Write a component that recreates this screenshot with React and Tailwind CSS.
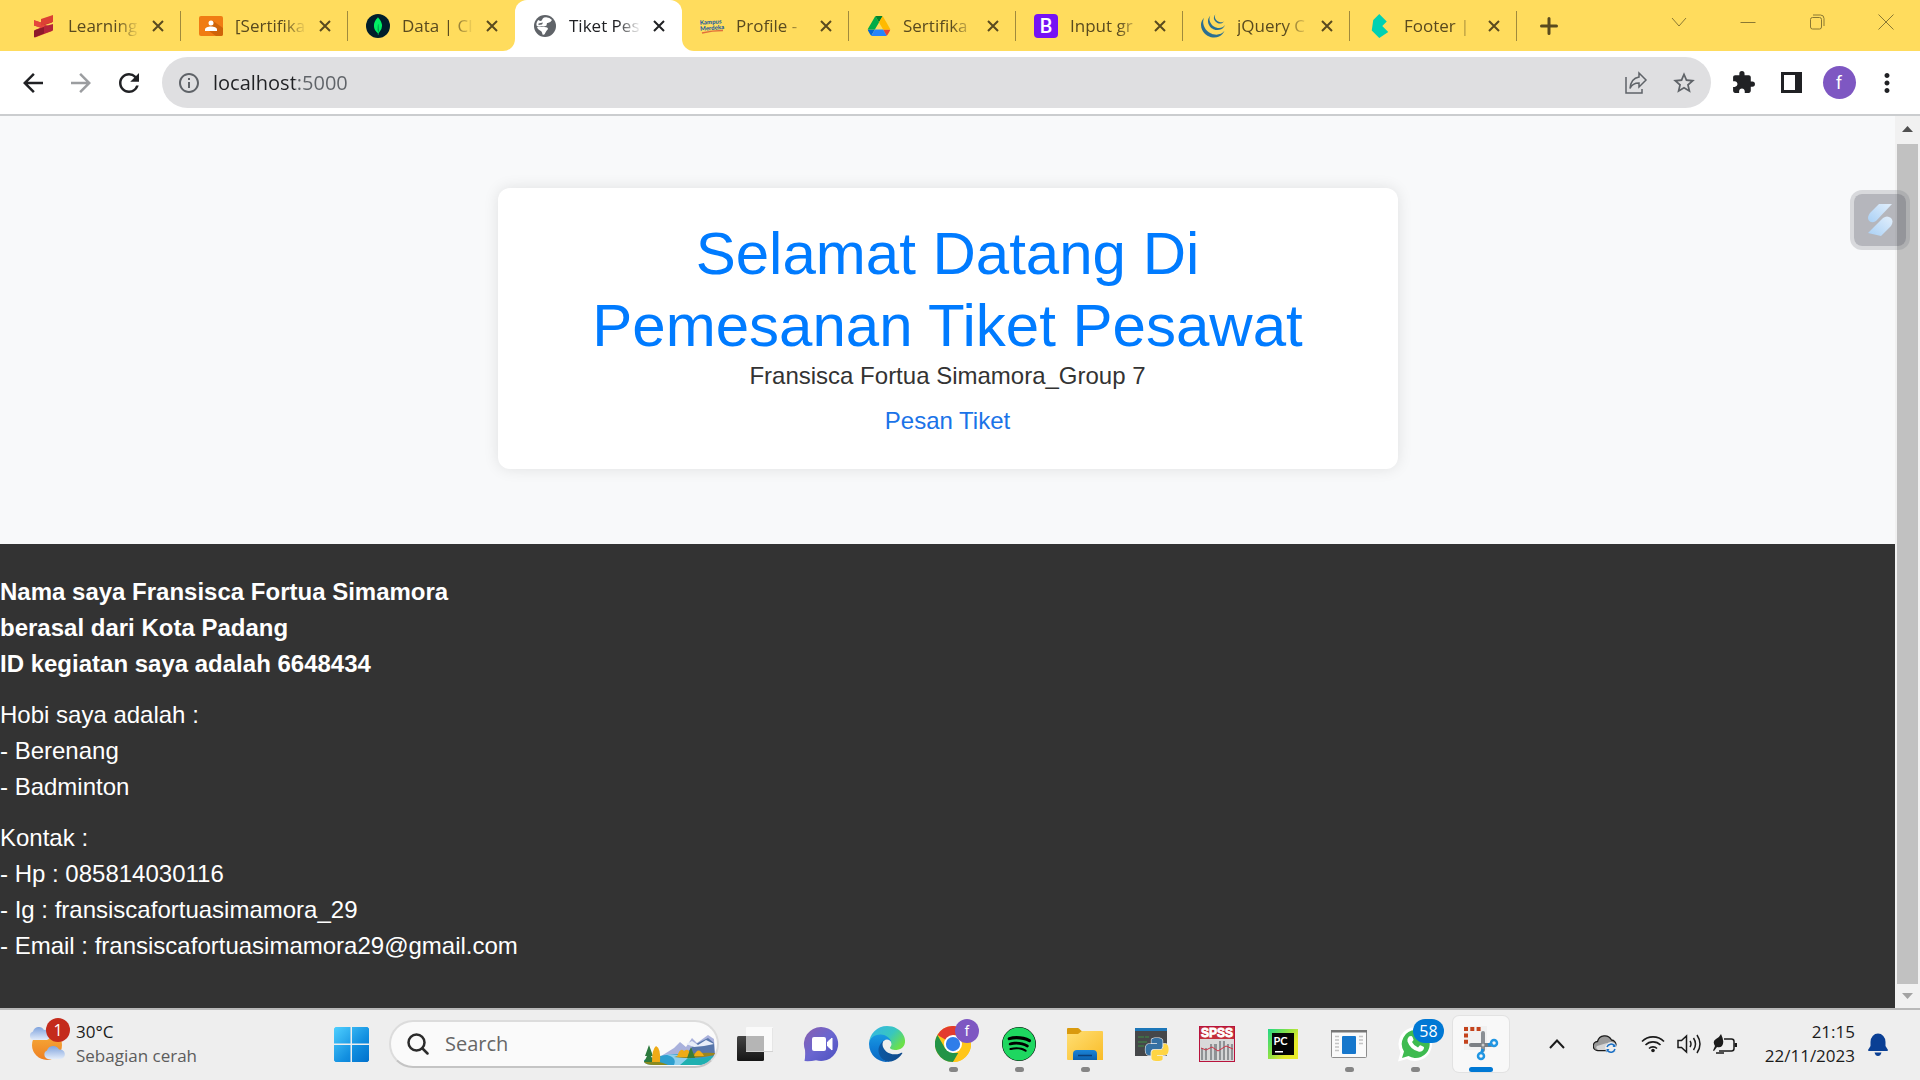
import React from "react";
import {
  MdArrowBack,
  MdArrowForward,
  MdExtension,
  MdInfoOutline,
  MdMoreVert,
  MdRefresh,
  MdStarBorder,
} from "react-icons/md";
import { SiBulma, SiJquery, SiMongodb } from "react-icons/si";
import { FaSpotify } from "react-icons/fa";

const SANS = "font-['Open_Sans','Noto_Sans',sans-serif]";

/* ---------- Tab favicons ---------- */

function LearningIcon() {
  return (
    <svg viewBox="0 0 24 24" className="size-6">
      <path d="M2 6.500 L9 8.500 L20 5 V8.500 L13 11 L20 12.500 V17 L3 23.500 V16 L9 13.500 L2 11.500 Z" fill="#c62f30" />
      <path d="M2 6 L9 8.500 L14 12 L9 14 L2 11.500 Z" fill="#e5473c" />
      <path d="M9 5 L21 1 V8 L9 11.500 Z" fill="#dc4034" />
      <path d="M2 16.500 L12 13 V19.500 L2 23.500 Z" fill="#8f1a2b" />
      <path d="M12 12.500 L21 10 V16.500 L12 19.500 Z" fill="#b3243a" />
    </svg>
  );
}

function ClassroomIcon() {
  return (
    <svg viewBox="0 0 24 24" className="size-6">
      <rect x="0" y="2" width="24" height="20" rx="2" fill="#f07c13" />
      <path d="M14 7 L24 14 V20 Q24 22 22 22 H17 L10 17 Z" fill="#cf6409" />
      <circle cx="12" cy="9" r="2.500" fill="#fff" />
      <path d="M6 17 V15.500 C6 13.500 9 12.500 12 12.500 S18 13.500 18 15.500 V17 Z" fill="#fff" />
    </svg>
  );
}

function MongoIcon() {
  return (
    <span className="flex size-6 items-center justify-center rounded-full bg-[#001e2b]">
      <SiMongodb className="size-[18px] text-[#00ed64]" />
    </span>
  );
}

function GlobeIcon() {
  return (
    <svg viewBox="0 0 24 24" className="size-6">
      <circle cx="12" cy="12" r="11" fill="#5f6368" />
      <path d="M11 3.500 Q16 2.500 19 6 Q17 9.500 14 9 L13.500 11.500 Q11 13 8 12 Q5 13 3.500 11.500 Q3 8 5.500 6 Q8 8 9 6 Q9.500 4 11 3.500 Z" fill="#fff" />
      <path d="M4 13 Q7 12 10 13 Q15 12.500 15 15 Q13 17 12.500 18.500 Q11.500 21.500 9.500 20.500 Q9 17 7 16.500 Q4.500 15.500 4 13 Z" fill="#fff" />
      <path d="M5.500 9.500 L10 8.500 L9 10.500 L5.500 11 Z" fill="#5f6368" />
    </svg>
  );
}

function KampusIcon() {
  return (
    <svg viewBox="0 0 24 24" className="size-6 overflow-visible">
      <g transform="rotate(-4 12 12)" fontFamily="Lato, sans-serif" fontWeight="900" fill="#235d9f">
        <text x="0" y="10" fontSize="6">Kampus</text>
        <text x="0" y="16" fontSize="6">Merdeka</text>
      </g>
      <path d="M2 19 Q12 16.500 23 16.500" stroke="#e2703a" strokeWidth="1.500" fill="none" />
    </svg>
  );
}

function DriveIcon() {
  return (
    <svg viewBox="0 0 87.3 78" className="h-5 w-6">
      <path d="m6.6 66.85 3.85 6.65c.8 1.4 1.95 2.5 3.3 3.3l13.75-23.8h-27.5c0 1.55.4 3.1 1.2 4.5z" fill="#0066da" />
      <path d="m43.65 25-13.75-23.8c-1.35.8-2.5 1.9-3.3 3.3l-25.4 44a9.06 9.06 0 0 0-1.2 4.5h27.5z" fill="#00ac47" />
      <path d="m73.55 76.8c1.35-.8 2.5-1.9 3.3-3.3l1.6-2.75 7.65-13.25c.8-1.4 1.2-2.95 1.2-4.5h-27.5l5.85 11.5z" fill="#ea4335" />
      <path d="m43.65 25 13.75-23.8c-1.35-.8-2.9-1.2-4.5-1.2h-18.5c-1.6 0-3.15.45-4.5 1.2z" fill="#00832d" />
      <path d="m59.8 53h-32.3l-13.75 23.8c1.35.8 2.9 1.2 4.5 1.2h50.8c1.6 0 3.15-.45 4.5-1.2z" fill="#2684fc" />
      <path d="m73.4 26.5-12.7-22c-.8-1.4-1.95-2.5-3.3-3.3l-13.75 23.8 16.15 28h27.45c0-1.55-.4-3.1-1.2-4.5z" fill="#ffba00" />
    </svg>
  );
}

function BootstrapIcon() {
  return (
    <span className="flex size-6 items-center justify-center rounded-sm bg-[#7512f5] font-['Roboto',sans-serif] text-xl leading-none font-medium text-white">
      B
    </span>
  );
}

const TABS = [
  { title: "Learning", icon: <LearningIcon /> },
  { title: "[Sertifika", icon: <ClassroomIcon /> },
  { title: "Data | Cl", icon: <MongoIcon /> },
  { title: "Tiket Pes", icon: <GlobeIcon />, active: true },
  { title: "Profile -", icon: <KampusIcon /> },
  { title: "Sertifika", icon: <DriveIcon /> },
  { title: "Input gr", icon: <BootstrapIcon /> },
  { title: "jQuery C", icon: <SiJquery className="size-6 text-[#2a6f92]" /> },
  { title: "Footer |", icon: <SiBulma className="size-6 text-[#00d1b2]" /> },
];

function Tab({ tab, divider }) {
  return (
    <div
      className={
        tab.active
          ? "relative flex h-full w-[167px] items-center rounded-t-xl bg-white text-[#202124]"
          : "relative flex h-full w-[167px] items-center text-[#594a1f]"
      }
    >
      {tab.active && (
        <>
          <span className="absolute bottom-0 -left-3 size-3 bg-white">
            <span className="block size-3 rounded-br-xl bg-[#ffdc5d]" />
          </span>
          <span className="absolute -right-3 bottom-0 size-3 bg-white">
            <span className="block size-3 rounded-bl-xl bg-[#ffdc5d]" />
          </span>
        </>
      )}
      <button type="button" className="flex h-full min-w-0 flex-1 items-center gap-3 pl-[18px]">
        <span className="flex w-6 shrink-0 justify-center">{tab.icon}</span>
        <span className="text-left text-[17px] whitespace-nowrap [mask-image:linear-gradient(to_right,black_48px,transparent_72px)]">
          {tab.title}
        </span>
      </button>
      <button type="button" aria-label="Close tab" className="mr-2.5 flex size-6 items-center justify-center">
        <svg viewBox="0 0 12 12" className="size-3" stroke="currentColor" strokeWidth="2">
          <path d="M1 1 L11 11 M11 1 L1 11" />
        </svg>
      </button>
      <span className={divider ? "h-[30px] w-px bg-[#a08a3c]" : "h-[30px] w-px"} />
    </div>
  );
}

function WindowButton({ label, children }) {
  return (
    <button type="button" aria-label={label} className="flex h-[43px] w-[69px] items-center justify-center text-[#8a7833]">
      <svg viewBox="0 0 16 16" className="size-4" fill="none" stroke="currentColor">
        {children}
      </svg>
    </button>
  );
}

function TabStrip() {
  return (
    <div className="flex h-[51px] bg-[#ffdc5d] pl-3.5">
      {TABS.map((tab, i) => (
        <Tab key={i} tab={tab} divider={!tab.active && !(TABS[i + 1] && TABS[i + 1].active)} />
      ))}
      <button type="button" aria-label="New tab" className="ml-4 flex w-8 items-center justify-center text-[#594a1f]">
        <svg viewBox="0 0 18 18" className="size-[18px]" stroke="currentColor" strokeWidth="3" strokeLinecap="round">
          <path d="M9 1.500 V16.500 M1.500 9 H16.500" />
        </svg>
      </button>
      <div className="ml-auto flex">
        <WindowButton label="Search tabs">
          <path d="M1 4 L8 12 L15 4" />
        </WindowButton>
        <WindowButton label="Minimize">
          <path d="M0.500 8.500 H15.500" />
        </WindowButton>
        <WindowButton label="Restore">
          <rect x="1.500" y="3.500" width="11" height="11.500" rx="2" />
          <path d="M4 1 H11.500 Q15 1 15 4.500 V12" />
        </WindowButton>
        <WindowButton label="Close">
          <path d="M0.500 0.500 L15.500 15.500 M15.500 0.500 L0.500 15.500" />
        </WindowButton>
      </div>
    </div>
  );
}

/* ---------- Toolbar ---------- */

function ToolButton({ label, children }) {
  return (
    <button type="button" aria-label={label} className="flex h-12 w-12 shrink-0 items-center justify-center">
      {children}
    </button>
  );
}

function Toolbar() {
  return (
    <div className="flex h-[65px] items-center border-b-2 border-[#cbcdcf] bg-white pr-[9px] pl-[9px] text-[#202124]">
      <ToolButton label="Back">
        <MdArrowBack className="size-[30px]" />
      </ToolButton>
      <ToolButton label="Forward">
        <MdArrowForward className="size-[30px] text-[#9b9da0]" />
      </ToolButton>
      <ToolButton label="Reload">
        <MdRefresh className="size-[30px]" />
      </ToolButton>
      <div className="mr-2 ml-[9px] flex h-[51px] min-w-0 flex-1 items-center rounded-full bg-[#dfdfe1] pr-[3px] pl-[15px]">
        <MdInfoOutline className="size-6 shrink-0 text-[#5f6368]" />
        <div className="relative ml-3 flex min-w-0 flex-1 items-center text-xl">
          <label htmlFor="address" className="sr-only">
            Address
          </label>
          <input
            id="address"
            type="text"
            defaultValue="localhost:5000"
            className="w-full bg-[linear-gradient(to_right,#202124_82px,#5f6368_82px)] bg-clip-text text-transparent outline-none"
          />
        </div>
        <ToolButton label="Share">
          <svg viewBox="0 0 24 24" className="size-6" fill="none" stroke="#5f6368" strokeWidth="1.500">
            <path d="M2 6 V22 H18 V18" />
            <path d="M15 2 L22 9 L15 16 V12 C10 12 7.500 14 6 17.500 C6.500 11 9 7 15 6 Z" />
          </svg>
        </ToolButton>
        <ToolButton label="Bookmark">
          <MdStarBorder className="size-[26px] text-[#5f6368]" />
        </ToolButton>
      </div>
      <ToolButton label="Extensions">
        <MdExtension className="size-[25px]" />
      </ToolButton>
      <ToolButton label="Side panel">
        <span className="flex h-[21px] w-[21px] border-[3px] border-r-[7px] border-[#202124]" />
      </ToolButton>
      <ToolButton label="Profile">
        <span className="flex size-[33px] items-center justify-center rounded-full bg-[#7e57c2] font-['Roboto',sans-serif] text-lg text-white">
          f
        </span>
      </ToolButton>
      <ToolButton label="Menu">
        <MdMoreVert className="size-[30px]" />
      </ToolButton>
    </div>
  );
}

/* ---------- Web page ---------- */

function Page() {
  return (
    <div className="flex flex-1 flex-col bg-[#f8f9fa] font-['Liberation_Sans',Arial,sans-serif] text-2xl leading-9 text-[#333]">
      <main className="px-6 pt-[72px] pb-[75px]">
        <section className="mx-auto max-w-[900px] rounded-xl bg-white p-[30px] text-center shadow-[0_0_15px_rgba(0,0,0,0.1)]">
          <h1 className="mx-auto max-w-[780px] text-6xl leading-[72px] text-[#007bff]">
            Selamat Datang Di Pemesanan Tiket Pesawat
          </h1>
          <h2 className="mb-[13px] text-2xl leading-7">Fransisca Fortua Simamora_Group 7</h2>
          <a href="#pesan" className="block text-[#1a73e8]">
            Pesan Tiket
          </a>
        </section>
      </main>
      <footer className="flex flex-1 flex-col gap-[15px] bg-[#333] pt-[30px] pb-6 text-white">
        <p className="font-bold">
          Nama saya Fransisca Fortua Simamora
          <br />
          berasal dari Kota Padang
          <br />
          ID kegiatan saya adalah 6648434
        </p>
        <p>
          Hobi saya adalah :<br />- Berenang
          <br />- Badminton
        </p>
        <p>
          Kontak :<br />- Hp : 085814030116
          <br />- Ig : fransiscafortuasimamora_29
          <br />- Email : fransiscafortuasimamora29@gmail.com
        </p>
      </footer>
    </div>
  );
}

function Scrollbar() {
  return (
    <div className="flex w-[25px] shrink-0 flex-col items-center bg-[#f1f1f1]">
      <svg viewBox="0 0 11 6" className="mt-[10px] mb-3 h-1.5 w-[11px]">
        <path d="M0 6 L5.500 0 L11 6 Z" fill="#505050" />
      </svg>
      <div className="w-[21px] flex-1 bg-[#c1c1c1]" />
      <svg viewBox="0 0 11 6" className="mt-[9px] mb-[9px] h-1.5 w-[11px]">
        <path d="M0 0 L5.500 6 L11 0 Z" fill="#a3a3a3" />
      </svg>
    </div>
  );
}

function FloatingWidget() {
  return (
    <button
      type="button"
      aria-label="Quick panel"
      className="absolute top-[74px] right-[10px] flex size-[60px] items-center justify-center rounded-xl border-4 border-[#787c85]/25 bg-[#50535f]/40 bg-clip-padding"
    >
      <svg viewBox="0 0 26 34" className="h-[34px] w-[26px]">
        <defs>
          <linearGradient id="widgetBlue" x1="0" y1="1" x2="1" y2="0">
            <stop offset="0" stopColor="#a9d0f5" />
            <stop offset="1" stopColor="#e2effc" />
          </linearGradient>
        </defs>
        <path d="M12 1 H25 L9 18 Q4 21 1.500 17 Q0 14 3 10 Z" fill="url(#widgetBlue)" />
        <path d="M14 33 L1 30 L16 15 Q20 12 24 15 Q27 18 24 23 Z" fill="url(#widgetBlue)" />
      </svg>
    </button>
  );
}

/* ---------- Taskbar icons ---------- */

function WeatherIcon() {
  return (
    <svg viewBox="0 0 38 36" className="h-9 w-[38px]">
      <defs>
        <linearGradient id="sun" x1="0" y1="0" x2="0" y2="1">
          <stop offset="0" stopColor="#f7b23c" />
          <stop offset="1" stopColor="#ee7f22" />
        </linearGradient>
        <linearGradient id="cloud" x1="0" y1="0" x2="0" y2="1">
          <stop offset="0" stopColor="#7fa3dd" />
          <stop offset="1" stopColor="#e3ecfa" />
        </linearGradient>
      </defs>
      <circle cx="19" cy="19" r="15" fill="url(#sun)" />
      <path d="M5 14 A4.500 4.500 0 0 1 5 5.500 A6 6 0 0 1 16 4 A5 5 0 0 1 19 14 Z" fill="url(#cloud)" />
      <path d="M20 33 A4.500 4.500 0 0 1 19 24.500 A6.500 6.500 0 0 1 31 23.500 A4.500 4.500 0 0 1 33 33 Z" fill="url(#cloud)" />
    </svg>
  );
}

function StartIcon() {
  return (
    <svg viewBox="0 0 35 35" className="size-[35px]">
      <defs>
        <linearGradient id="win" x1="0" y1="0" x2="1" y2="1">
          <stop offset="0" stopColor="#4fd0ff" />
          <stop offset="0.600" stopColor="#128fe0" />
          <stop offset="1" stopColor="#0070cc" />
        </linearGradient>
      </defs>
      <path
        d="M1.500 0 H16.500 V16.500 H0 V1.500 Z M18 0 H33.500 L35 1.500 V16.500 H18 Z M0 18 H16.500 V35 H1.500 L0 33.500 Z M18 18 H35 V33.500 L33.500 35 H18 Z"
        fill="url(#win)"
      />
    </svg>
  );
}

function LandscapeIcon() {
  return (
    <svg viewBox="0 0 72 32" className="h-8 w-[72px]">
      <path d="M14 24 L30 14 L36 8 L42 13 L48 4 L53 9 L64 1 L70 5 L71 24 Z" fill="#a9b1dc" />
      <path d="M40 22 L50 11 L58 7 L64 4 L70 9 L71 24 Z" fill="#5877ab" />
      <path d="M42 10 L48 7 L54 11 L62 6 L70 10 L60 12 L50 13 Z" fill="#e9eef9" />
      <path d="M0 26 Q30 16 71 22 L68 27 Q62 31 54 31 H10 Q2 31 0 28 Z" fill="#2e9fcf" />
      <path d="M18 20 Q34 22 30 31 H50 Q40 25 50 22 Z" fill="#8fd0ee" />
      <path d="M44 24 Q58 27 71 21 L69 26 Q62 31 54 31 H36 Z" fill="#1fb0b0" />
      <path d="M30 23 Q50 26 71 21 V19 Q50 18 30 23 Z" fill="#9a8620" />
      <path d="M0 27 Q12 26 24 31 H10 Q2 31 0 28 Z" fill="#8a8a1e" />
      <path d="M5 11 L9 22 H7 L10 28 H0 L3 22 H1 Z" fill="#2c7a3e" />
      <path d="M12 12 Q17 14 16 28 H8 Q8 15 12 12 Z M33 23 Q36 13 40 17 Q46 13 46 23 Z M50 22 Q54 11 60 22 Z" fill="#efab16" />
      <path d="M47 13 L51 24 H43 Z" fill="#3b7d35" />
    </svg>
  );
}

function TaskViewIcon() {
  return (
    <svg viewBox="0 0 36 36" className="size-9">
      <defs>
        <linearGradient id="tv" x1="0" y1="0" x2="0" y2="1">
          <stop offset="0" stopColor="#444" />
          <stop offset="1" stopColor="#151515" />
        </linearGradient>
      </defs>
      <rect x="0" y="10" width="27" height="25" rx="1.500" fill="url(#tv)" />
      <rect x="9" y="1" width="27" height="24" rx="1" fill="#fafafa" />
      <rect x="9" y="10" width="18" height="15" fill="#b5b5b5" />
      <path d="M9 25.500 H36 V2" stroke="#d2d2d2" fill="none" />
    </svg>
  );
}

function MeetIcon() {
  return (
    <svg viewBox="0 0 36 36" className="size-9">
      <defs>
        <linearGradient id="meet" x1="0" y1="0" x2="1" y2="1">
          <stop offset="0" stopColor="#8a5fae" />
          <stop offset="0.500" stopColor="#6a66d0" />
          <stop offset="1" stopColor="#4c50c0" />
        </linearGradient>
      </defs>
      <path d="M18 1 A17 17 0 1 1 13 34.200 Q7 35.500 1.500 35 Q2.500 30 2 24 A17 17 0 0 1 18 1 Z" fill="url(#meet)" />
      <rect x="9" y="11" width="14" height="14" rx="2" fill="#fff" />
      <path d="M24.500 16 L29 12 V24 L24.500 20 Z" fill="#fff" stroke="#fff" strokeLinejoin="round" />
    </svg>
  );
}

function EdgeIcon() {
  return (
    <svg viewBox="0 0 256 256" className="size-9">
      <defs>
        <linearGradient id="edgeA" x1="0" y1="0" x2="1" y2="0">
          <stop offset="0" stopColor="#0c59a4" />
          <stop offset="1" stopColor="#114a8b" />
        </linearGradient>
        <linearGradient id="edgeB" x1="0" y1="0" x2="0" y2="1">
          <stop offset="0" stopColor="#1b9de2" />
          <stop offset="0.500" stopColor="#0f7fd6" />
          <stop offset="1" stopColor="#0a67c0" />
        </linearGradient>
        <linearGradient id="edgeC" x1="0" y1="0" x2="1" y2="0.600">
          <stop offset="0" stopColor="#35b4e8" />
          <stop offset="0.600" stopColor="#38c6c0" />
          <stop offset="1" stopColor="#6be04a" />
        </linearGradient>
      </defs>
      <path d="M230.600 190.500a98 98 0 0 1-10.500 4.700 101.700 101.700 0 0 1-35.800 6.400c-47.200 0-88.300-32.500-88.300-74.100a31.400 31.400 0 0 1 16.400-27.300c-42.700 1.800-53.600 46.300-53.600 72.300 0 73.700 67.900 81.200 82.600 81.200 7.900 0 19.800-2.300 27-4.600l1.300-.4a127.900 127.900 0 0 0 66.600-52.700 4 4 0 0 0-5.700-5.500z" fill="url(#edgeA)" />
      <path d="M105.700 241.400a79.200 79.200 0 0 1-22.700-21.300 80.700 80.700 0 0 1 29.500-120c3.200-1.500 8.500-4.100 15.600-4a32.400 32.400 0 0 1 25.700 13 31.900 31.900 0 0 1 6.400 18.700c0-.2 24.500-79.600-80-79.600-43.900 0-80 41.700-80 78.200a130.200 130.200 0 0 0 12.100 56 128 128 0 0 0 156.400 67 75.500 75.500 0 0 1-62.900-8z" fill="url(#edgeB)" />
      <path d="M152.300 148.900c-.8 1-3.300 2.500-3.300 5.700 0 2.700 1.700 5.200 4.800 7.300 14.400 10.100 41.700 8.700 41.800 8.700a59.800 59.800 0 0 0 30.300-8.300 61.400 61.400 0 0 0 30.400-52.900c.3-22.400-8-37.300-11.300-43.900C223.700 23.700 177.700 0 128 0A128 128 0 0 0 0 126.200c.5-36.500 36.800-66 80-66 3.500 0 23.500.3 42 10.100 16.300 8.500 24.800 18.900 30.800 29.100 6.100 10.700 7.200 24.100 7.200 29.500s-2.700 13.300-7.800 19.900z" fill="url(#edgeC)" />
    </svg>
  );
}

function ChromeIcon() {
  return (
    <svg viewBox="0 0 48 48" className="size-9">
      <circle cx="24" cy="24" r="24" fill="#ffc61a" />
      <path d="M24 24 L3.200 12 A24 24 0 0 1 44.800 12 H24 Z" fill="#e33b2e" />
      <path d="M3.200 12 L13.600 30 L24 36 H34.400 L24 48 A24 24 0 0 1 3.200 12 Z" fill="#239447" />
      <path d="M34.400 30 L24 48 A24 24 0 0 0 44.800 12 H24 Z" fill="#ffc61a" />
      <circle cx="24" cy="24" r="12" fill="#fff" />
      <circle cx="24" cy="24" r="9.500" fill="#2f7de9" />
    </svg>
  );
}

function SpotifyIcon() {
  return (
    <span className="flex size-[34px] items-center justify-center rounded-full bg-black">
      <FaSpotify className="size-[34px] text-[#1ed760]" />
    </span>
  );
}

function FolderIcon() {
  return (
    <svg viewBox="0 0 36 34" className="h-[34px] w-9">
      <defs>
        <linearGradient id="folder" x1="0" y1="0" x2="1" y2="1">
          <stop offset="0" stopColor="#ffdf74" />
          <stop offset="1" stopColor="#f9bc28" />
        </linearGradient>
        <linearGradient id="folderBlue" x1="0" y1="0" x2="0" y2="1">
          <stop offset="0" stopColor="#1a84d8" />
          <stop offset="1" stopColor="#0e62ae" />
        </linearGradient>
      </defs>
      <path d="M0 2 Q0 1 1 1 H11 Q12 1 14 3.500 L16 5 H0 Z M0 5 H14 V8 H0 Z" fill="#d99a0e" />
      <path d="M0 7 H11 L15 4 H35 Q36 4 36 5 V33 H1 Q0 33 0 32 Z" fill="url(#folder)" />
      <path d="M6 33 V27 Q6 23 10 23 H26 Q30 23 30 27 V33 Z" fill="url(#folderBlue)" />
      <path d="M11 28.500 H25" stroke="#0b3f78" strokeWidth="1.500" />
    </svg>
  );
}

function PythonIcon() {
  const snake =
    "M14.250.18l.9.2.73.26.59.3.45.32.34.34.25.34.16.33.1.3.04.26.02.2-.01.13V8.500l-.05.63-.13.55-.21.46-.26.38-.3.31-.33.25-.35.19-.35.14-.33.1-.3.07-.26.04-.21.02H8.770l-.69.05-.59.14-.5.22-.41.27-.33.32-.27.35-.2.36-.15.37-.1.35-.07.32-.04.27-.02.21v3.060H3.170l-.21-.03-.28-.07-.32-.12-.35-.18-.36-.26-.36-.36-.35-.46-.32-.59-.28-.73-.21-.88-.14-1.050-.05-1.230.06-1.220.16-1.040.24-.87.32-.71.36-.57.4-.44.42-.33.42-.24.4-.16.36-.1.32-.05.24-.01h.16l.06.01h8.160v-.83H6.180l-.01-2.750-.02-.37.05-.34.11-.31.17-.28.25-.26.31-.23.38-.2.44-.18.51-.15.58-.12.64-.1.71-.06.77-.04.84-.02 1.270.05z";
  return (
    <svg viewBox="0 0 36 36" className="size-9">
      <rect x="2" y="2" width="32" height="28" fill="#454749" />
      <rect x="2" y="2" width="32" height="3" fill="#1c76b8" />
      <path d="M5 11 H11 M12 11 H16 M5 16 H14 M5 20 H11" stroke="#3f8f45" strokeWidth="1.200" />
      <g transform="translate(12.500 12) scale(0.960)" stroke="#f3f3f3" strokeWidth="1.200" paintOrder="stroke">
        <path d={snake} fill="#3571a3" />
        <path d={snake} fill="#ffd544" transform="rotate(180 12 12)" />
      </g>
    </svg>
  );
}

function SpssIcon() {
  return (
    <svg viewBox="0 0 36 36" className="size-9">
      <rect x="0.500" y="0.500" width="35" height="35" fill="#d9d9d9" stroke="#b8123c" />
      <rect x="1" y="1" width="34" height="12" fill="#c3303c" />
      <text x="18" y="11" fontSize="12" fontWeight="700" fontFamily="Liberation Sans, sans-serif" fill="#fff" stroke="#fff" strokeWidth="0.800" textAnchor="middle">
        SPSS
      </text>
      <path d="M2 22 H8 V34 H2 Z M11 18 H18 V34 H11 Z M20 15 H26 V34 H20 Z M28 18 H34 V34 H28 Z" fill="#8f9295" />
      <path d="M4 22 H6 V34 H4 Z M13 18 H15 V34 H13 Z M22 15 H24 V34 H22 Z M30 18 H32 V34 H30 Z" fill="#d0d2d4" />
      <path d="M2 22 L7 24 L13 21 L19 25 L27 20 L34 23" stroke="#cf3346" fill="none" />
    </svg>
  );
}

function PycharmIcon() {
  return (
    <svg viewBox="0 0 30 30" className="size-[30px]">
      <defs>
        <linearGradient id="pyc" x1="0" y1="0" x2="0.800" y2="0.600">
          <stop offset="0" stopColor="#21d789" />
          <stop offset="0.500" stopColor="#7be04c" />
          <stop offset="1" stopColor="#e6ea2a" />
        </linearGradient>
      </defs>
      <rect width="30" height="30" fill="url(#pyc)" />
      <rect x="4" y="4" width="22" height="22" fill="#040404" />
      <text x="5.500" y="15.500" fontSize="11" fontWeight="700" fontFamily="Lato, sans-serif" fill="#fff">
        PC
      </text>
      <rect x="7" y="22" width="8" height="1.500" fill="#fff" />
    </svg>
  );
}

function WindowAppIcon() {
  return (
    <svg viewBox="0 0 36 28" className="h-7 w-9">
      <rect x="0.500" y="0.500" width="35" height="27" rx="1" fill="#fafafa" stroke="#8d8d8d" />
      <rect x="0" y="0" width="36" height="2.500" fill="#767676" />
      <rect x="11" y="6" width="14" height="18" rx="1" fill="#1677cc" />
      <path d="M4 6.500 H8 M4 10 H8 M4 13.500 H8 M4 17 H8 M4 20.500 H8 M28 6.500 H32 M28 10 H32 M28 13.500 H32" stroke="#c4c4c4" strokeWidth="1.500" />
    </svg>
  );
}

function WhatsappIcon() {
  return (
    <svg viewBox="0 0 36 36" className="size-9">
      <path d="M18 1 A17 17 0 1 1 10 33 L1 35.500 L3.500 26 A17 17 0 0 1 18 1 Z" fill="#fff" />
      <path d="M18.500 4 A14 14 0 1 1 11.500 30 L5 32 L7 25.500 A14 14 0 0 1 18.500 4 Z" fill="#3ebb50" />
      <path
        d="M12 10.500 L14 10 Q15 10 15.500 11 L16.500 13.500 Q16.800 14.300 15 16 Q17 20 21 21.500 L22.700 19.600 Q23.200 19.200 24 19.500 L26.500 20.700 Q27.200 21.200 27 22 Q26 26 22 25.700 Q13.500 24 10.500 15.500 Q10 12.500 12 10.500 Z"
        fill="#fff"
      />
    </svg>
  );
}

function SnipIcon() {
  return (
    <svg viewBox="0 0 36 36" className="size-9">
      <rect x="1" y="0" width="23" height="24" fill="#f1f1f1" />
      <path d="M1 3 H18" stroke="#c4431c" strokeWidth="4" strokeDasharray="4 2.300" />
      <path d="M3 7.500 V18" stroke="#c4431c" strokeWidth="4" strokeDasharray="4 2.300" />
      <path d="M20 7 V24" stroke="#8b8f94" strokeWidth="4" strokeLinecap="round" />
      <path d="M8 19 H28" stroke="#7b7f84" strokeWidth="4" strokeLinecap="round" />
      <circle cx="20" cy="19" r="1.500" fill="#cfcfcf" />
      <path d="M20 23 L18.500 27 M25 19 L28 18" stroke="#1d8fdc" strokeWidth="3" />
      <circle cx="18" cy="30" r="3" fill="none" stroke="#2196e3" strokeWidth="2.500" />
      <circle cx="31" cy="17" r="3" fill="none" stroke="#2196e3" strokeWidth="2.500" />
    </svg>
  );
}

const APPS = [
  { label: "Task view", icon: <TaskViewIcon /> },
  { label: "Chat", icon: <MeetIcon /> },
  { label: "Edge", icon: <EdgeIcon /> },
  { label: "Chrome", icon: <ChromeIcon />, running: true, badge: "f" },
  { label: "Spotify", icon: <SpotifyIcon />, running: true },
  { label: "File Explorer", icon: <FolderIcon />, running: true },
  { label: "Python", icon: <PythonIcon /> },
  { label: "SPSS", icon: <SpssIcon /> },
  { label: "PyCharm", icon: <PycharmIcon /> },
  { label: "Window app", icon: <WindowAppIcon />, running: true },
  { label: "WhatsApp", icon: <WhatsappIcon />, running: true, count: "58" },
  { label: "Snipping Tool", icon: <SnipIcon />, active: true },
];

function AppButton({ app }) {
  return (
    <button
      type="button"
      aria-label={app.label}
      className={
        app.active
          ? "relative mx-[5px] flex size-14 items-center justify-center rounded-md bg-[#f8f8f8] shadow-[0_0_0_1px_#e2e2e2]"
          : "relative mx-[5px] flex size-14 items-center justify-center"
      }
    >
      {app.icon}
      {app.badge && (
        <span className="absolute top-[3px] right-[2px] flex size-6 items-center justify-center rounded-full bg-[#7e57c2] font-['Roboto',sans-serif] text-sm text-white">
          {app.badge}
        </span>
      )}
      {app.count && (
        <span className="absolute top-[3px] -right-px flex h-6 w-[31px] items-center justify-center rounded-full bg-[#0078d4] text-base text-white">
          {app.count}
        </span>
      )}
      {app.running && <span className="absolute bottom-0 left-6 h-[5px] w-[9px] rounded-full bg-[#858585]" />}
      {app.active && <span className="absolute bottom-0 left-4 h-[5px] w-6 rounded-full bg-[#0078d4]" />}
    </button>
  );
}

function Tray() {
  return (
    <div className="ml-auto flex items-center text-[#1b1b1b]">
      <button type="button" aria-label="Show hidden icons" className="flex h-12 w-12 items-center justify-center">
        <svg viewBox="0 0 16 10" className="h-2.5 w-4" fill="none" stroke="currentColor" strokeWidth="2">
          <path d="M1 9 L8 1.500 L15 9" />
        </svg>
      </button>
      <button type="button" aria-label="OneDrive" className="flex h-12 w-12 items-center justify-center">
        <svg viewBox="0 0 25 20" className="h-5 w-[25px]">
          <path d="M5 16.500 A4.500 4.500 0 0 1 4.500 7.500 A7.500 7.500 0 0 1 18.500 6 A5 5 0 0 1 23 11 L22 16.500 Z" fill="#9a9a9a" stroke="#1b1b1b" strokeWidth="1.300" />
          <path d="M5 16 Q2 14 4 12 L14 9 L12 16 Z" fill="#d5d5d5" />
          <circle cx="18" cy="14" r="6" fill="#eee" />
          <path d="M14 13 A4.200 4.200 0 0 1 21.500 12 M22 15 A4.200 4.200 0 0 1 14.500 16.500" stroke="#1a6fc4" strokeWidth="1.500" fill="none" />
          <path d="M22.500 9.500 V13 H19.500 Z M13.500 18.500 V15 H16.500 Z" fill="#1a6fc4" />
        </svg>
      </button>
      <button type="button" aria-label="Network, volume and battery" className="flex h-12 items-center gap-3 px-3">
        <svg viewBox="0 0 24 18" className="h-[18px] w-6" fill="none" stroke="currentColor" strokeWidth="1.600">
          <path d="M1 6.500 A15.500 15.500 0 0 1 23 6.500 M4.500 10 A10.500 10.500 0 0 1 19.500 10 M8 13.500 A5.700 5.700 0 0 1 16 13.500" />
          <circle cx="12" cy="15.500" r="1.800" fill="currentColor" stroke="none" />
        </svg>
        <svg viewBox="0 0 24 20" className="h-5 w-6" fill="none" stroke="currentColor" strokeWidth="1.500">
          <path d="M1 6.500 H4.500 L9.500 2 V18 L4.500 13.500 H1 Z M13 7 Q15 10 13 13 M16.500 4 Q20.500 10 16.500 16 M20 1 Q26 10 20 19" />
        </svg>
        <svg viewBox="0 0 24 20" className="h-5 w-6">
          <path d="M11 5 H18.500 Q21 5 21 7.500 V14.500 Q21 17 18.500 17 H6" fill="none" stroke="currentColor" strokeWidth="1.500" />
          <rect x="21.500" y="9" width="2.500" height="4" fill="currentColor" />
          <path d="M8 0 Q12 8 9 12 Q7 14 4 13 L1 17 L0 16.500 L2 12 Q-1 7 3 5 Q6 4 8 0 Z" fill="currentColor" />
          <path d="M3 19 H11" stroke="currentColor" strokeWidth="1.500" />
        </svg>
      </button>
      <time className="w-[106px] text-right text-[17px] leading-6" dateTime="2023-11-22T21:15">
        <span className="block">21:15</span>
        <span className="block">22/11/2023</span>
      </time>
      <button type="button" aria-label="Notifications" className="mr-8 ml-[13px] flex items-center">
        <svg viewBox="0 0 20 23" className="h-[23px] w-5" fill="#0a3f94">
          <path d="M2.500 9 A7.500 8.500 0 0 1 17.500 9 V13 L20 17 Q20 18 19 18 H1 Q0 18 0 17 L2.500 13 Z M6.500 19.500 H13.500 Q12.500 23 10 23 T6.500 19.500 Z" />
        </svg>
      </button>
    </div>
  );
}

function Taskbar() {
  return (
    <div className="flex h-[72px] items-center border-t-2 border-[#b9b9b9] bg-[#eee] pb-0.5">
      <button type="button" className="flex w-[307px] items-center gap-2.5 pl-7 text-left">
        <span className="relative shrink-0">
          <WeatherIcon />
          <span className="absolute -top-2 -right-1 flex size-6 items-center justify-center rounded-full bg-[#c42b1c] text-base text-white">
            1
          </span>
        </span>
        <span className="text-[17px] leading-6 whitespace-nowrap">
          <span className="block text-[#1b1b1b]">30°C</span>
          <span className="block text-[#5c5c5c]">Sebagian cerah</span>
        </span>
      </button>
      <button type="button" aria-label="Start" className="ml-[27px] flex shrink-0">
        <StartIcon />
      </button>
      <div className="ml-5 flex h-12 w-[330px] items-center overflow-hidden rounded-full border-2 border-[#dcdcdc] border-b-[#c4c4c4] bg-[#fafafa] pl-4">
        <svg viewBox="0 0 22 22" className="size-[22px] shrink-0" fill="none" stroke="#2b2b2b" strokeWidth="2.500" strokeLinecap="round">
          <circle cx="9.500" cy="9.500" r="8" />
          <path d="M15.500 15.500 L20.500 20.500" />
        </svg>
        <input
          type="search"
          aria-label="Search"
          placeholder="Search"
          className="ml-4 w-full min-w-0 text-xl outline-none placeholder:text-[#666]"
        />
        <span className="mr-px shrink-0 self-end">
          <LandscapeIcon />
        </span>
      </div>
      <div className="ml-[3px] flex">
        {APPS.map((app) => (
          <AppButton key={app.label} app={app} />
        ))}
      </div>
      <Tray />
    </div>
  );
}

export default function App() {
  return (
    <div className={"flex min-h-screen flex-col " + SANS}>
      <TabStrip />
      <Toolbar />
      <div className="relative flex flex-1">
        <Page />
        <Scrollbar />
        <FloatingWidget />
      </div>
      <Taskbar />
    </div>
  );
}
